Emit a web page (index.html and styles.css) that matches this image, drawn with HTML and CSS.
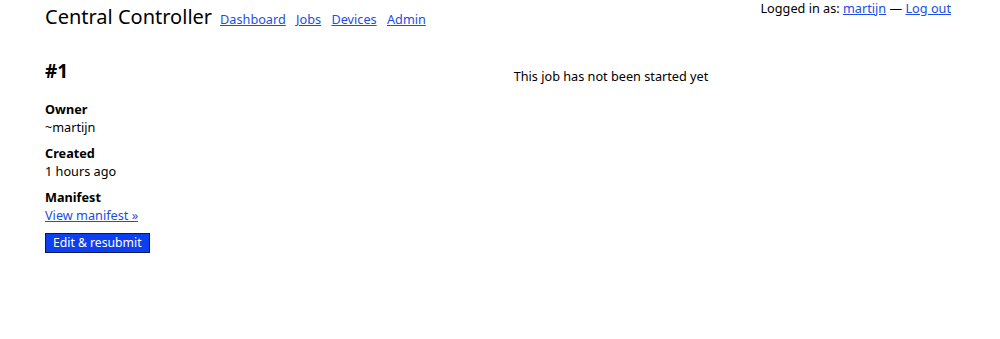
FILE: index.html
```html
<!DOCTYPE html>
<html lang="en">
<head>
    <meta charset="UTF-8">
    <title>Job #1 - Central Controller</title>
    <link rel="stylesheet" href="styles.css">
</head>
<body>
    <header class="topbar">
        <div class="brand">
            <span class="title">Central Controller</span>
            <nav class="nav">
                <a href="#">Dashboard</a>
                <a href="#">Jobs</a>
                <a href="#">Devices</a>
                <a href="#">Admin</a>
            </nav>
        </div>
        <div class="login">Logged in as: <a href="#">martijn</a> &mdash; <a href="#">Log out</a></div>
    </header>

    <main class="job">
        <section class="job-info">
            <h2>#1</h2>
            <dl>
                <dt>Owner</dt>
                <dd>~martijn</dd>
                <dt>Created</dt>
                <dd>1 hours ago</dd>
                <dt>Manifest</dt>
                <dd><a href="#">View manifest &raquo;</a></dd>
            </dl>
            <button class="resubmit">Edit &amp; resubmit</button>
        </section>
        <section class="job-log">
            <p>This job has not been started yet</p>
        </section>
    </main>
</body>
</html>
```

FILE: styles.css
```css
body { font-family: "Noto Sans", sans-serif; font-size: 12.7px; color: #000; margin: 0; padding: 0 49px 0 45px; }
a { color: #1a4ee6; }
.topbar { display: flex; justify-content: space-between; align-items: flex-start; }
.brand { display: flex; align-items: baseline; padding-top: 3px; }
.title { font-size: 20px; margin-right: 8px; }
.nav a { margin-right: 7px; }
.login { line-height: 16px; }
.job { display: flex; margin-top: 28px; }
.job-info { width: 226px; }
.job-info h2 { font-size: 19px; margin: 0 0 16px; }
dl { margin: 0; }
dt { font-weight: bold; line-height: 18px; }
dd { margin: 0 0 8px; line-height: 18px; }
.resubmit { font-family: "Noto Sans", sans-serif; font-size: 12.2px; line-height: 16px; color: #fff; background: #0d3ff0; border: 1px solid #0a1a50; padding: 1px 7px; margin-top: 1px; }
.job-log { flex: 1; text-align: center; }
.job-log p { margin: 9px 0 0; }
```
